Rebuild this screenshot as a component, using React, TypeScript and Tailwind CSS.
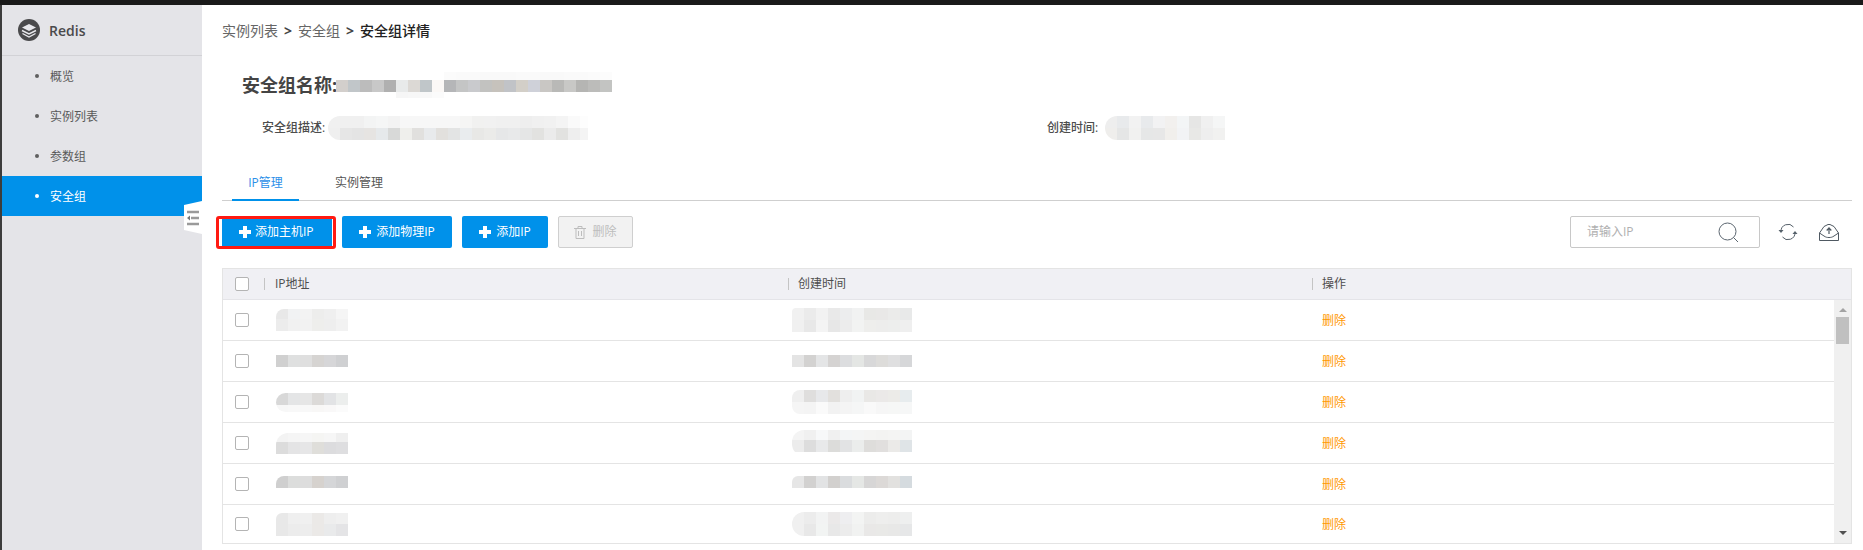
import React from 'react';

type MosaicRow = { h: number; colors: string[] };

const navItems = ['概览', '实例列表', '参数组', '安全组'];

// 打码区域：每行一组色块
const Mosaic: React.FC<{ rows: MosaicRow[]; cell: number; className?: string }> = ({ rows, cell, className }) => (
  <div className={`flex flex-col overflow-hidden ${className ?? ''}`}>
    {rows.map((row, i) => (
      <div key={i} className="flex">
        {row.colors.map((c, j) => (
          <div key={j} className="shrink-0" style={{ width: cell, height: row.h, backgroundColor: c }} />
        ))}
      </div>
    ))}
  </div>
);

const w6 = ['#fff', '#fff', '#fff', '#fff', '#fff', '#fff'];
const w10 = ['#fff', '#fff', '#fff', '#fff', '#fff', '#fff', '#fff', '#fff', '#fff', '#fff'];

const ipMosaics: { rows: MosaicRow[]; cls: string }[] = [
  {
    cls: 'rounded-tl-lg',
    rows: [
      { h: 10, colors: ['#e8e8e8', '#f1f2f3', '#f3f3f3', '#ededec', '#efefef', '#f5f5f5'] },
      { h: 12, colors: ['#ececec', '#f1f1f1', '#f2f2f2', '#eeeeec', '#eeeeee', '#f2f2f2'] },
    ],
  },
  { cls: '', rows: [{ h: 12, colors: ['#d0d0d0', '#dfe0e0', '#dfdfdf', '#d6d4d2', '#d6d6d8', '#cfd0d2'] }] },
  {
    cls: 'rounded-l-xl',
    rows: [
      { h: 12, colors: ['#d8d8d8', '#e4e5e6', '#e6e6e6', '#dcdad8', '#e2e3e5', '#eceeed'] },
      { h: 7, colors: ['#f7f7f7', '#f8f8f8', '#f8f8f8', '#f8f7f6', '#f9f8f8', '#fbfbfb'] },
    ],
  },
  {
    cls: 'rounded-tl-xl',
    rows: [
      { h: 9, colors: ['#f3f3f3', '#f5f5f5', '#f6f6f6', '#f5f5f3', '#f6f6f6', '#efefef'] },
      { h: 12, colors: ['#dcdcdc', '#e4e4e5', '#e6e6e7', '#dfdeda', '#dcdcde', '#dedee0'] },
    ],
  },
  {
    cls: 'rounded-tl-lg',
    rows: [
      { h: 12, colors: ['#cfcfcf', '#dcdddc', '#dddddd', '#d6d2ce', '#d5d6d8', '#cfd0d2'] },
      { h: 4, colors: w6 },
    ],
  },
  {
    cls: 'rounded-tl-md',
    rows: [
      { h: 11, colors: ['#e8e8e8', '#efefef', '#f0f0f0', '#ebe9e7', '#eeeeee', '#f0f0f0'] },
      { h: 12, colors: ['#e8e8e8', '#ececec', '#ededed', '#ebe9e7', '#e9eaeb', '#e4e4e6'] },
    ],
  },
];

const timeMosaics: { rows: MosaicRow[]; cls: string }[] = [
  {
    cls: 'rounded-tl-sm',
    rows: [
      { h: 12, colors: ['#f1f1f1', '#ebebeb', '#f2f2f2', '#e9e9e9', '#ecedee', '#f1f2f2', '#e8e8e6', '#e9e8e7', '#ebebea', '#e8e9e9'] },
      { h: 12, colors: ['#f0f0f0', '#e8e8e8', '#f4f4f4', '#e7e7e7', '#ececec', '#f2f3f2', '#eeeeec', '#ededec', '#edeeed', '#efefef'] },
    ],
  },
  { cls: '', rows: [{ h: 12, colors: ['#e4e4e4', '#d3d2d1', '#e4e5e6', '#d5d3d2', '#dcdddf', '#e4e6e4', '#d8d8d9', '#dddcda', '#dfdfe0', '#d6d7d9'] }] },
  {
    cls: 'rounded-l-lg',
    rows: [
      { h: 12, colors: ['#efefef', '#dfdedd', '#e7e8ea', '#e2e0dd', '#eeeeee', '#f1f3f3', '#e9e8e6', '#ebe9e8', '#ecebe8', '#e7ecee'] },
      { h: 12, colors: ['#f5f5f5', '#f4f4f4', '#fafafa', '#f2f2f2', '#f4f4f4', '#f5f6f6', '#f9f9f9', '#f6f6f6', '#f6f7f6', '#f6f7f7'] },
    ],
  },
  {
    cls: 'rounded-l-xl',
    rows: [
      { h: 10, colors: ['#f4f4f4', '#f0f0f0', '#f7f8f9', '#f0f0f0', '#f3f5f6', '#f4f5f5', '#f4f4f3', '#f3f3f2', '#f4f4f3', '#f3f4f4'] },
      { h: 12, colors: ['#ececec', '#dddddd', '#e8e9ea', '#dcdcda', '#e2e3e4', '#ebedec', '#dedddb', '#e1dfde', '#ebeae8', '#dfe4e7'] },
      { h: 4, colors: w10 },
    ],
  },
  {
    cls: 'rounded-tl-md',
    rows: [
      { h: 12, colors: ['#e6e6e6', '#d2d1d0', '#e2e3e4', '#d2d0ce', '#dadcde', '#e5e7e5', '#d7d6d6', '#dcd9d7', '#e2e1df', '#d5dbdf'] },
      { h: 4, colors: w10 },
    ],
  },
  {
    cls: 'rounded-l-2xl',
    rows: [
      { h: 12, colors: ['#f0f0f0', '#ececec', '#f2f3f3', '#ebe9e9', '#eeeef0', '#f3f4f3', '#ececeb', '#eeeeed', '#ededec', '#eeefef'] },
      { h: 12, colors: ['#f0f0f0', '#e8e8e8', '#f2f4f3', '#e8e8e8', '#ececec', '#f1f2f1', '#e9e8e7', '#e9e9e7', '#e8e8e7', '#e6e7e8'] },
    ],
  },
];

const titleMosaic: MosaicRow[] = [
  {
    h: 8,
    colors: ['#fff', '#fff', '#fff', '#fff', '#fff', '#fff', '#fff', '#fff', '#fff', '#fbfbfb', '#fafafa', '#fafafa', '#f9f9f9', '#f9f9f9', '#f9f9f9', '#fafafa', '#fafafa', '#f9f9f9', '#f9f9f9', '#fafafa', '#fafafa', '#fbfbfb', '#fcfcfc'],
  },
  {
    h: 12,
    colors: ['#d3cfcc', '#c1c6c9', '#bcbcbc', '#c8c8c8', '#b0b0b0', '#e8eaea', '#dcd9d5', '#c0c6c9', '#fbf8f6', '#b5b6b8', '#c4c5c5', '#c9cacd', '#c2c2c0', '#c6c2bc', '#c1c3c7', '#d3cfc8', '#cfd1d9', '#c9c7c4', '#b9b9b7', '#c8c8c6', '#b5b5b3', '#bcbcba', '#c3c4c2'],
  },
  {
    h: 6,
    colors: ['#fff', '#fff', '#fff', '#fff', '#fff', '#f6f6f6', '#f7f7f7', '#f8f8f8', '#fbfbfb', '#fff', '#fff', '#fff', '#fff', '#fff', '#fff', '#fff', '#fff', '#fff', '#fff', '#fff', '#fff', '#fff', '#fff'],
  },
];

const descMosaic: MosaicRow[] = [
  {
    h: 12,
    colors: ['#f0f0f0', '#f0f0f0', '#f0f0f0', '#f3f4f4', '#f5f6f6', '#f3f3f3', '#f7f7f7', '#f7f7f7', '#f7f7f7', '#f7f7f7', '#f7f7f7', '#f5f5f4', '#f1f1f0', '#f1f1f1', '#f0f0f0', '#f0f0f0', '#eeeeee', '#f0f0f0', '#f1f1f1', '#f4f4f4', '#fafafa', '#fdfdfd'],
  },
  {
    h: 12,
    colors: ['#efefef', '#e6e6e6', '#e4e4e4', '#e6e4e2', '#e6e9eb', '#d8d9d8', '#efefec', '#e1e0de', '#e8eaec', '#e2e0dd', '#e3e4e4', '#e9ecee', '#e8e8e6', '#ebebe9', '#e6e7e8', '#e8e9ea', '#e5e6e6', '#e2e2e0', '#ebebeb', '#e2e2e0', '#eeeeee', '#f4f4f4'],
  },
];

const createdMosaic: MosaicRow[] = [
  { h: 12, colors: ['#eeeeee', '#e8eaec', '#f2f2f2', '#e8eaec', '#f2f2f3', '#f2f0ee', '#f3f5f6', '#e6e6e5', '#f0f0f0', '#f5f6f6'] },
  { h: 12, colors: ['#efeeec', '#e5e6e6', '#f1f1f0', '#e6e7e7', '#e7e7e7', '#f1efec', '#f2f3f5', '#e8e8e6', '#eeeeee', '#f1f1f0'] },
];

const PlusIcon = () => (
  <svg width="12" height="12" viewBox="0 0 12 12" className="shrink-0">
    <path d="M4 0h4v4h4v4H8v4H4V8H0V4h4z" fill="#fff" />
  </svg>
);

const LogoIcon = () => (
  <svg width="22" height="22" viewBox="0 0 22 22">
    <circle cx="11" cy="11" r="11" fill="#4a4a4c" />
    <path d="M4 8.5 11 5l7 3.5L11 12z" fill="#e8e8ec" />
    <path d="M4 11.5l7 3.5 7-3.5" fill="none" stroke="#e8e8ec" strokeWidth="1.4" />
    <path d="M4.5 14.5 11 18l6.5-3.5" fill="none" stroke="#e8e8ec" strokeWidth="1.4" />
  </svg>
);

const RefreshIcon = () => (
  <svg width="20" height="18" viewBox="0 0 20 18" fill="none" stroke="#55606a" strokeWidth="1" className="shrink-0">
    <path d="M3 8.5A7 7 0 0 1 15.5 4" />
    <path d="M17 9.5A7 7 0 0 1 4.5 14" />
    <path d="M0.5 7 3 10l2.5-3z" fill="#55606a" stroke="none" />
    <path d="M14.5 11 17 8l2.5 3z" fill="#55606a" stroke="none" />
  </svg>
);

const UploadIcon = () => (
  <svg width="20" height="17" viewBox="0 0 20 17" fill="none" stroke="#4f5962" strokeWidth="1" className="shrink-0">
    <path d="M.5 9 5 2.5 9 .5h2l4 2L19.5 9v7.5H.5z" />
    <path d="M.5 9 5 12c2 1.3 3 1.5 5 1.5s3-.2 5-1.5l4.500-3" />
    <path d="M10 10V4.500M7.700 6.500 10 4l2.300 2.500" strokeWidth="1.200" />
  </svg>
);

const Checkbox = () => <span className="block w-[14px] h-[14px] border border-[#b4b4b4] rounded-[2px] bg-white" />;

const Separator = () => <span className="absolute left-0 top-[9px] h-[12px] w-px bg-[#c4c4c4]" />;

const App: React.FC = () => {
  return (
    <div className="h-[550px] w-full overflow-hidden flex flex-col bg-white text-[12px] text-[#4d4d4d] font-['Open_Sans','Noto_Sans_CJK_SC',sans-serif]">
      <div className="h-[5px] shrink-0 bg-[#1a1a1a]" />
      <div className="flex flex-1 min-h-0">
        <div className="w-[2px] shrink-0 bg-[#3c3c3c]" />

        {/* 侧边栏 */}
        <aside className="relative w-[200px] shrink-0 bg-[#e4e4e8]">
          <div className="h-[51px] flex items-center pl-[16px] gap-[9px] border-b border-[#d2d2d6]">
            <LogoIcon />
            <span className="text-[14px] font-semibold text-[#4a4a4c]">Redis</span>
          </div>
          <nav>
            {navItems.map((item) => (
              <div
                key={item}
                className={`h-[40px] flex items-center pl-[33px] gap-[11px] ${
                  item === '安全组' ? 'bg-[#0091ea] text-white' : 'text-[#5a5a5a]'
                }`}
              >
                <span className={`w-[4px] h-[4px] rounded-full ${item === '安全组' ? 'bg-white' : 'bg-[#5f5f5f]'}`} />
                <span className="pt-px">{item}</span>
              </div>
            ))}
          </nav>
          {/* 收起按钮 */}
          <svg width="18" height="33" viewBox="0 0 18 33" className="absolute right-0 top-[196px]">
            <path d="M0 4 18 0v33L0 29z" fill="#fff" />
            <path d="M3 11h12M7 17h8M3 23h12" stroke="#9a9a9a" strokeWidth="2.4" />
            <path d="M3 17l3-2.500v5z" fill="#777" />
          </svg>
        </aside>

        {/* 主内容 */}
        <main className="flex-1 min-w-0 pl-[20px] pr-[11px] flex flex-col">
          <div className="mt-[15px] h-[20px] flex items-center gap-[6px] text-[14px] text-[#666] shrink-0">
            <span>实例列表</span>
            <span className="font-bold text-[#444]">&gt;</span>
            <span>安全组</span>
            <span className="font-bold text-[#444]">&gt;</span>
            <span className="font-medium text-[#222]">安全组详情</span>
          </div>

          <div className="mt-[32px] ml-[20px] h-[26px] flex items-center shrink-0">
            <span className="text-[18px] font-bold text-[#444] w-[94px] whitespace-nowrap">安全组名称:</span>
            <Mosaic rows={titleMosaic} cell={12} />
          </div>

          <div className="mt-[18px] h-[24px] flex items-center shrink-0">
            <div className="w-[825px] flex items-center pl-[40px]">
              <span className="w-[65px] font-medium whitespace-nowrap">安全组描述:</span>
              <Mosaic rows={descMosaic} cell={12} className="ml-[1px] w-[260px] rounded-l-xl" />
            </div>
            <div className="flex items-center">
              <span className="w-[53px] font-medium whitespace-nowrap">创建时间:</span>
              <Mosaic rows={createdMosaic} cell={12} className="ml-[5px] rounded-l-xl" />
            </div>
          </div>

          {/* 标签页 */}
          <div className="mt-[25px] h-[36px] flex border-b border-[#cfcfcf] shrink-0">
            <div className="relative ml-[10px] w-[67px] flex items-center justify-center text-[#2b8fe8]">
              IP管理
              <span className="absolute left-0 right-0 bottom-[-1px] h-[2px] bg-[#0091ea]" />
            </div>
            <div className="ml-[36px] flex items-center text-[#555]">实例管理</div>
          </div>

          {/* 工具栏 */}
          <div className="mt-[15px] h-[32px] flex items-center shrink-0 -ml-[6px]">
            <button className="w-[120px] h-[33px] rounded-[3px] border-[3px] border-[#ff1a12] bg-white pl-[3px] pr-[1px]">
              <span className="h-full bg-[#0091ea] text-white flex items-center pl-[17px] gap-[4px]">
                <PlusIcon />
                添加主机IP
              </span>
            </button>
            <button className="ml-[6px] w-[110px] h-[32px] rounded-[2px] bg-[#0091ea] text-white flex items-center justify-center gap-[5px]">
              <PlusIcon />
              添加物理IP
            </button>
            <button className="ml-[10px] w-[86px] h-[32px] rounded-[2px] bg-[#0091ea] text-white flex items-center justify-center gap-[5px]">
              <PlusIcon />
              添加IP
            </button>
            <button className="ml-[10px] w-[75px] h-[32px] rounded-[2px] border border-[#cfcfcf] bg-[#f2f2f2] text-[#bdbdbd] flex items-center justify-center gap-[6px]">
              <svg width="12" height="13" viewBox="0 0 12 13" fill="none" stroke="#bdbdbd" strokeWidth="1">
                <path d="M0 2.500h12M4 2.500V.5h4v2M2 2.500v10h8v-10M4.500 5v5M7.500 5v5" />
              </svg>
              删除
            </button>
            <div className="ml-auto w-[190px] h-[32px] border border-[#c8c8c8] rounded-[2px] flex items-center pl-[16px] pr-[20px] justify-between">
              <span className="text-[#b0b0b0]">请输入IP</span>
              <svg width="21" height="21" viewBox="0 0 21 21" fill="none" stroke="#5c6670" strokeWidth="1">
                <circle cx="9.500" cy="9.500" r="8.500" />
                <path d="M15.500 15.500 20 20" />
              </svg>
            </div>
            <div className="ml-[18px] mr-[13px] flex items-center gap-[21px]">
              <RefreshIcon />
              <UploadIcon />
            </div>
          </div>

          {/* 表格 */}
          <div className="mt-[20px] border border-[#e4e4e4] flex flex-col shrink-0">
            <div className="h-[31px] bg-[#f0f0f4] border-b border-[#e4e4e8] grid grid-cols-[41px_524px_524px_1fr] items-center">
              <div className="pl-[12px]">
                <Checkbox />
              </div>
              <div className="relative h-full flex items-center pl-[11px]">
                <Separator />
                IP地址
              </div>
              <div className="relative h-full flex items-center pl-[10px]">
                <Separator />
                创建时间
              </div>
              <div className="relative h-full flex items-center pl-[10px]">
                <Separator />
                操作
              </div>
            </div>
            <div className="flex">
              <div className="flex-1 min-w-0">
                {ipMosaics.map((ip, i) => (
                  <div
                    key={i}
                    className={`${i === 5 ? 'h-[38px]' : 'h-[41px] border-b border-[#e4e4e4]'} grid grid-cols-[41px_524px_524px_1fr] items-center`}
                  >
                    <div className="pl-[12px]">
                      <Checkbox />
                    </div>
                    <div className="pl-[12px]">
                      <Mosaic rows={ip.rows} cell={12} className={`w-fit ${ip.cls}`} />
                    </div>
                    <div className="pl-[4px]">
                      <Mosaic rows={timeMosaics[i].rows} cell={12} className={`w-fit ${timeMosaics[i].cls}`} />
                    </div>
                    <div className="pl-[10px] pt-px text-[#ff9800]">删除</div>
                  </div>
                ))}
              </div>
              {/* 滚动条 */}
              <div className="w-[17px] shrink-0 bg-[#f0f0f0] flex flex-col items-center">
                <span className="mt-[8px] border-x-[4px] border-x-transparent border-b-[4px] border-b-[#a3a3a3]" />
                <span className="mt-[5px] w-[13px] h-[27px] bg-[#c0c0c0]" />
                <span className="mt-auto mb-[8px] border-x-[4px] border-x-transparent border-t-[4px] border-t-[#505050]" />
              </div>
            </div>
          </div>
        </main>
      </div>
    </div>
  );
};

export default App;
